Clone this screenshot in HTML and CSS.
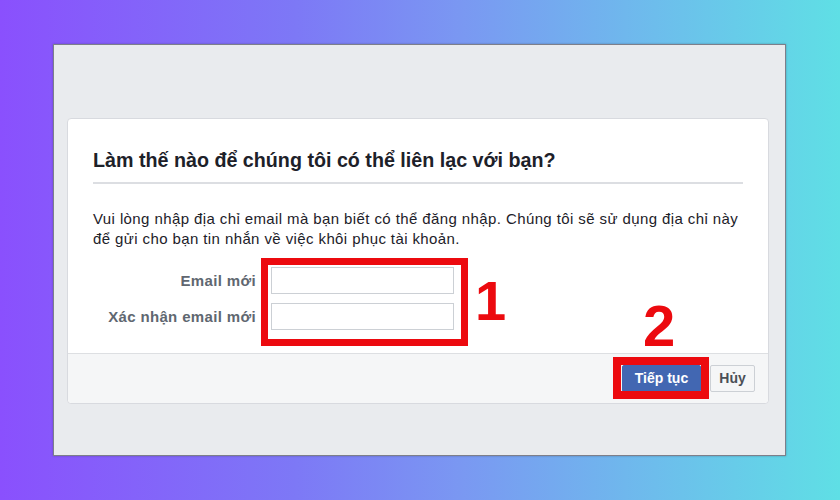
FILE: index.html
```html
<!DOCTYPE html>
<html lang="vi">
<head>
<meta charset="utf-8">
<title>Làm thế nào để chúng tôi có thể liên lạc với bạn?</title>
<link rel="stylesheet" href="styles.css">
</head>
<body>
<div class="stage">
  <div class="panel">
    <div class="card">
      <div class="card-body">
        <h2 class="title">Làm thế nào để chúng tôi có thể liên lạc với bạn?</h2>
        <p class="desc">Vui lòng nhập địa chỉ email mà bạn biết có thể đăng nhập. Chúng tôi sẽ sử dụng địa chỉ này để gửi cho bạn tin nhắn về việc khôi phục tài khoản.</p>
        <div class="form">
          <div class="labels">
            <label class="label">Email mới</label>
            <label class="label">Xác nhận email mới</label>
          </div>
          <div class="inputs">
            <input class="field" type="text">
            <input class="field" type="text">
            <div class="mark mark-inputs"></div>
            <span class="num num-1">1</span>
          </div>
        </div>
        <span class="num num-2">2</span>
      </div>
      <div class="card-foot">
        <div class="btn-wrap">
          <button class="btn btn-primary">Tiếp tục</button>
          <div class="mark mark-btn"></div>
        </div>
        <button class="btn btn-secondary">Hủy</button>
      </div>
    </div>
  </div>
</div>
</body>
</html>
```

FILE: styles.css
```css
* { box-sizing: border-box; }

html, body {
  margin: 0;
  padding: 0;
}

body {
  width: 840px;
  height: 500px;
  overflow: hidden;
  background: linear-gradient(90deg, #8a50fd 0%, #7d78f6 35%, #7a98f2 55%, #6dbdec 78%, #5fdfe5 100%);
  font-family: "Liberation Sans", Arial, sans-serif;
}

.stage {
  padding: 44px 54px 44px 53px;
}

.panel {
  height: 412px;
  background: #e9ebee;
  border: 1px solid #7d7f8a;
  box-shadow: 0 0 2px rgba(40, 40, 60, 0.35);
  padding: 73px 16px 0 13px;
}

.card {
  background: #fff;
  border: 1px solid #d8dadf;
  border-radius: 4px;
  overflow: visible;
}

.card-body {
  position: relative;
  padding: 29px 25px 23px 25px;
}

.title {
  margin: 0;
  font-size: 19.7px;
  line-height: 24px;
  font-weight: 700;
  color: #1d2129;
  padding-bottom: 10px;
  border-bottom: 2px solid #dcdee2;
}

.desc {
  margin: 25px 0 18px 0;
  font-size: 15px;
  letter-spacing: 0.4px;
  line-height: 20px;
  color: #1d2129;
}

.form {
  display: flex;
  gap: 15px;
}

.labels {
  width: 163px;
  display: flex;
  flex-direction: column;
  gap: 9px;
}

.label {
  height: 27px;
  display: flex;
  align-items: center;
  justify-content: flex-end;
  font-size: 15px;
  letter-spacing: 0.35px;
  font-weight: 700;
  color: #606770;
  white-space: nowrap;
}

.inputs {
  position: relative;
  width: 183px;
  display: flex;
  flex-direction: column;
  gap: 9px;
}

.field {
  display: block;
  width: 183px;
  height: 27px;
  margin: 0;
  border: 1px solid #ccd0d5;
  border-radius: 0;
  background: #fff;
  padding: 3px 6px;
  font: 14px "Liberation Sans", Arial, sans-serif;
}

.mark {
  position: absolute;
  border: 7px solid #ec0a0f;
  pointer-events: none;
}

.mark-inputs {
  left: -10px;
  top: -9px;
  right: -14px;
  bottom: -16px;
}

.num {
  position: absolute;
  font-family: "Liberation Sans", Arial, sans-serif;
  font-weight: 700;
  font-size: 56px;
  line-height: 56px;
  color: #ec0a0f;
}

.num-1 {
  left: 204px;
  top: 6px;
}

.num-2 {
  left: 575px;
  top: 179px;
  font-size: 58px;
}

.card-foot {
  background: #f5f6f7;
  border-top: 1px solid #dddfe2;
  border-radius: 0 0 4px 4px;
  height: 50px;
  display: flex;
  justify-content: flex-end;
  align-items: center;
  gap: 9px;
  padding: 0 13px 0 0;
}

.btn-wrap {
  position: relative;
  display: flex;
}

.btn {
  height: 27px;
  margin: 0;
  font-family: "Liberation Sans", Arial, sans-serif;
  font-size: 14px;
  font-weight: 700;
  line-height: 25px;
  border-radius: 2px;
  cursor: pointer;
}

.btn-primary {
  width: 79px;
  padding: 0;
  background: #4267b2;
  border: 1px solid #4267b2;
  color: #fff;
}

.btn-secondary {
  width: 45px;
  padding: 0;
  background: #f5f6f7;
  border: 1px solid #ccd0d5;
  color: #4b4f56;
}

.mark-btn {
  left: -9px;
  top: -8px;
  right: -8px;
  bottom: -7px;
  border-width: 8px;
}
```
